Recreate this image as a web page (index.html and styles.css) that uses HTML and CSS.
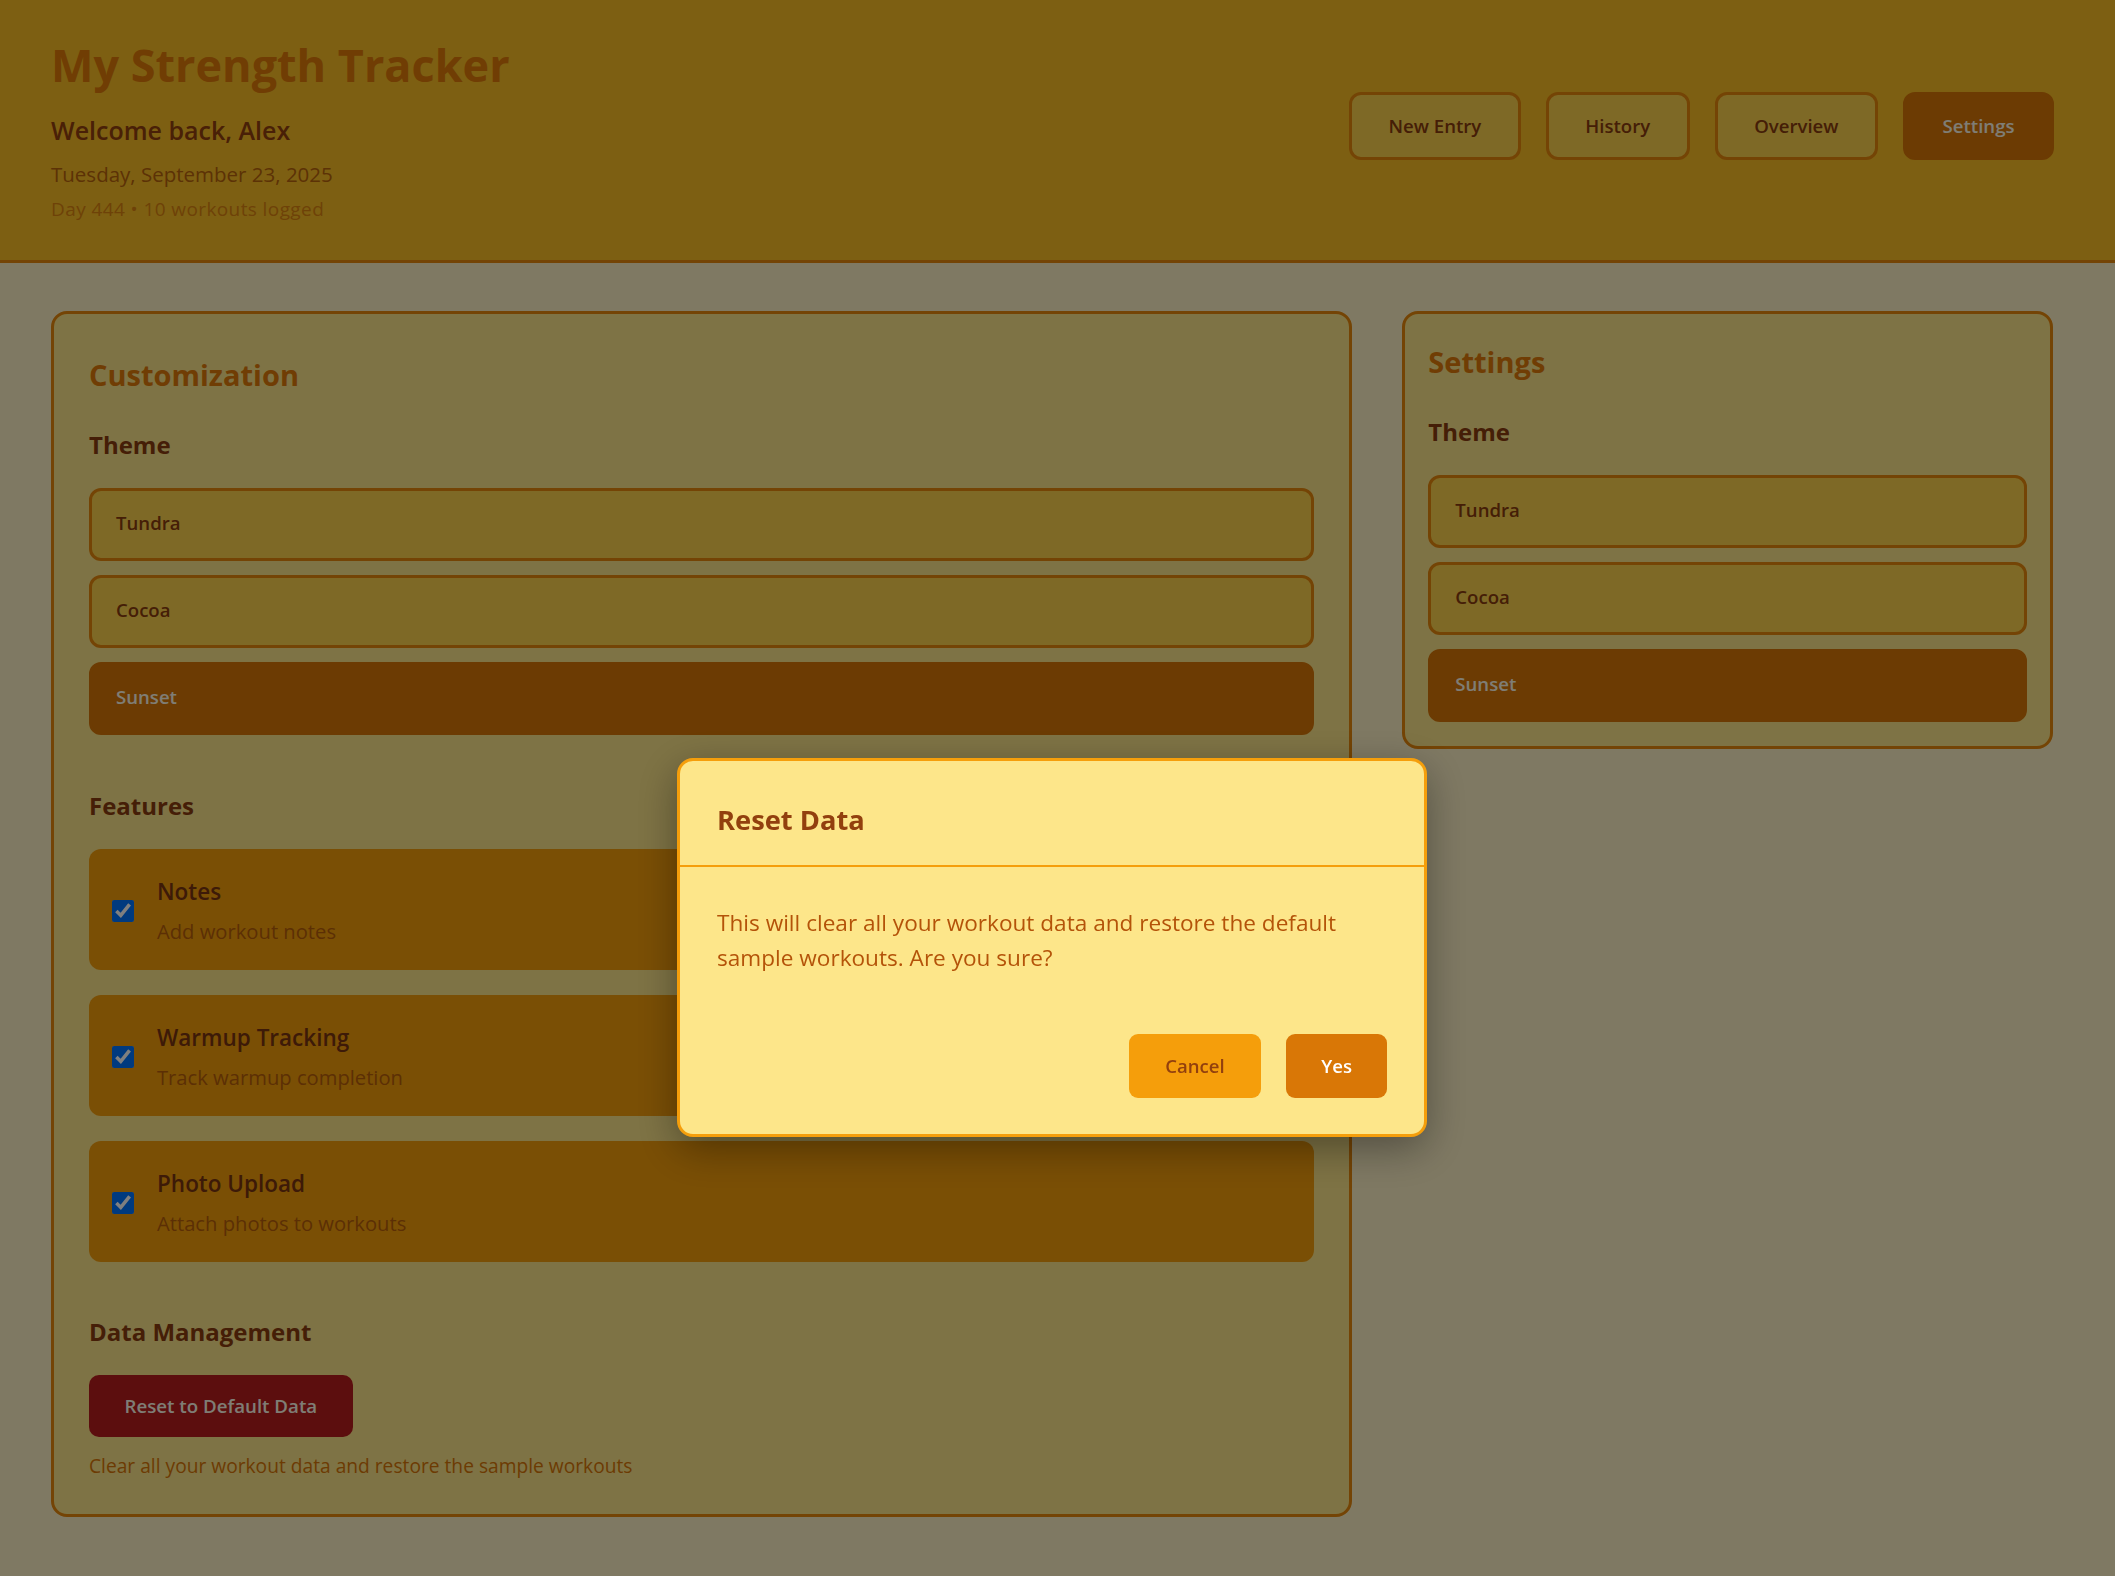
FILE: index.html
```html
<!DOCTYPE html>
<html lang="en">
<head>
<meta charset="utf-8">
<title>My Strength Tracker</title>
<link rel="stylesheet" href="styles.css">
</head>
<body>
<header class="app-header">
  <div class="brand">
    <h1 class="brand-title">My Strength Tracker</h1>
    <p class="brand-welcome">Welcome back, Alex</p>
    <p class="brand-date">Tuesday, September 23, 2025</p>
    <p class="brand-stats">Day 444 • 10 workouts logged</p>
  </div>
  <nav class="nav">
    <button class="nav-btn">New Entry</button>
    <button class="nav-btn">History</button>
    <button class="nav-btn">Overview</button>
    <button class="nav-btn is-active">Settings</button>
  </nav>
</header>

<main class="layout">
  <section class="panel panel-main">
    <h2 class="panel-title">Customization</h2>

    <div class="section">
      <h3 class="section-title">Theme</h3>
      <div class="theme-list">
        <button class="theme-option">Tundra</button>
        <button class="theme-option">Cocoa</button>
        <button class="theme-option is-selected">Sunset</button>
      </div>
    </div>

    <div class="section">
      <h3 class="section-title">Features</h3>
      <div class="feature-list">
        <label class="feature-card">
          <input class="feature-check" type="checkbox" checked>
          <span class="feature-text">
            <span class="feature-name">Notes</span>
            <span class="feature-desc">Add workout notes</span>
          </span>
        </label>
        <label class="feature-card">
          <input class="feature-check" type="checkbox" checked>
          <span class="feature-text">
            <span class="feature-name">Warmup Tracking</span>
            <span class="feature-desc">Track warmup completion</span>
          </span>
        </label>
        <label class="feature-card">
          <input class="feature-check" type="checkbox" checked>
          <span class="feature-text">
            <span class="feature-name">Photo Upload</span>
            <span class="feature-desc">Attach photos to workouts</span>
          </span>
        </label>
      </div>
    </div>

    <div class="section">
      <h3 class="section-title">Data Management</h3>
      <button class="danger-btn">Reset to Default Data</button>
      <p class="hint">Clear all your workout data and restore the sample workouts</p>
    </div>
  </section>

  <aside class="panel panel-side">
    <h2 class="panel-title">Settings</h2>
    <div class="section">
      <h3 class="section-title">Theme</h3>
      <div class="theme-list">
        <button class="theme-option">Tundra</button>
        <button class="theme-option">Cocoa</button>
        <button class="theme-option is-selected">Sunset</button>
      </div>
    </div>
  </aside>
</main>

<div class="overlay">
  <div class="modal" role="dialog" aria-labelledby="modal-title">
    <div class="modal-header">
      <h2 class="modal-title" id="modal-title">Reset Data</h2>
    </div>
    <div class="modal-body">
      <p class="modal-text">This will clear all your workout data and restore the default sample workouts. Are you sure?</p>
    </div>
    <div class="modal-footer">
      <button class="modal-btn modal-btn-cancel">Cancel</button>
      <button class="modal-btn modal-btn-confirm">Yes</button>
    </div>
  </div>
</div>
</body>
</html>
```
FILE: styles.css
```css
* { box-sizing: border-box; }

html, body {
  margin: 0;
  padding: 0;
}

body {
  font-family: "Open Sans", "Noto Sans", sans-serif;
  background: #fef3c7;
  color: #92400e;
  min-height: 100vh;
}

button {
  font-family: inherit;
  cursor: pointer;
}

/* ---------- Header ---------- */
.app-header {
  display: flex;
  justify-content: space-between;
  align-items: flex-start;
  background: #fbbf24;
  border-bottom: 3px solid #e8880a;
  padding: 38px 61px 38px 51px;
}

.brand-title {
  margin: 0;
  font-size: 45px;
  line-height: 53px;
  font-weight: 700;
  color: #e07a08;
}

.brand-welcome {
  margin: 22px 0 0;
  font-size: 25px;
  line-height: 34px;
  font-weight: 600;
  color: #92400e;
}

.brand-date {
  margin: 12.7px 0 0;
  font-size: 20.5px;
  line-height: 28px;
  color: #b8640c;
}

.brand-stats {
  margin: 8.6px 0 0;
  font-size: 19px;
  line-height: 26px;
  letter-spacing: 0.4px;
  color: #dc8410;
}

.nav {
  display: flex;
  gap: 25px;
  margin-top: 53.5px;
}

.nav-btn {
  font-size: 18.6px;
  line-height: 26px;
  font-weight: 600;
  padding: 18px 36.5px;
  border: 3px solid #e8880a;
  border-radius: 12px;
  background: #fcd34d;
  color: #8a3c0e;
}

.nav-btn.is-active {
  background: #d97706;
  border-color: #d97706;
  color: #fffbeb;
}

/* ---------- Layout ---------- */
.layout {
  display: grid;
  grid-template-columns: 2fr 1fr;
  gap: 50px;
  align-items: start;
  padding: 48px 62px 48px 51px;
}

.panel {
  background: #fde68a;
  border: 3px solid #e8880a;
  border-radius: 16px;
}

.panel-main {
  padding: 42px 35px 35px;
}

.panel-side {
  padding: 29px 23px 24px;
}

.panel-title {
  margin: 0 0 34.5px;
  font-size: 29px;
  line-height: 38px;
  font-weight: 700;
  color: #e07a08;
}

.section + .section {
  margin-top: 54.5px;
}

.section-title {
  margin: 0 0 27px;
  font-size: 24px;
  line-height: 32px;
  font-weight: 700;
  color: #8a3c0e;
}

/* ---------- Theme options ---------- */
.theme-list {
  display: flex;
  flex-direction: column;
  gap: 13.5px;
}

.theme-option {
  display: flex;
  align-items: center;
  width: 100%;
  height: 73.5px;
  padding: 0 24px 3px;
  border: 3px solid #e8880a;
  border-radius: 12px;
  background: #fcd34d;
  color: #8a3c0e;
  font-size: 18.6px;
  line-height: 26px;
  font-weight: 600;
  text-align: left;
}

.theme-option.is-selected {
  background: #d97706;
  border-color: #d97706;
  color: #fffbeb;
}

/* ---------- Features ---------- */
.feature-list {
  display: flex;
  flex-direction: column;
  gap: 25px;
}

.feature-card {
  display: flex;
  align-items: center;
  gap: 23px;
  padding: 27px 23px 24px;
  background: #f59e0b;
  border-radius: 12px;
}

.feature-check {
  width: 22px;
  height: 22px;
  margin: 0;
  flex: none;
}

.feature-text {
  display: flex;
  flex-direction: column;
}

.feature-name {
  font-size: 22.5px;
  line-height: 32px;
  font-weight: 600;
  color: #7a3510;
}

.feature-desc {
  margin-top: 8px;
  font-size: 20.2px;
  line-height: 30px;
  color: #b85e0a;
}

/* ---------- Data management ---------- */
.danger-btn {
  font-size: 18.7px;
  line-height: 26px;
  font-weight: 600;
  padding: 18px 35.5px;
  border: none;
  border-radius: 10px;
  background: #b91c1c;
  color: #fffbeb;
}

.hint {
  margin: 15px 0 0;
  font-size: 19.2px;
  line-height: 27px;
  color: #d97706;
}

/* ---------- Modal ---------- */
.overlay {
  position: fixed;
  inset: 0;
  background: rgba(0, 0, 0, 0.5);
  display: flex;
  justify-content: center;
  align-items: flex-start;
  padding: 758px 62px 0 51px;
}

.modal {
  width: 750px;
  background: #fde68a;
  border: 3px solid #f59e0b;
  border-radius: 16px;
  box-shadow: 0 12px 40px rgba(0, 0, 0, 0.35);
}

.modal-header {
  padding: 41px 37px 27px;
  border-bottom: 2px solid #f59e0b;
}

.modal-title {
  margin: 0;
  font-size: 27.3px;
  line-height: 36px;
  font-weight: 700;
  color: #92400e;
}

.modal-body {
  padding: 38px 37px 0;
}

.modal-text {
  margin: 0;
  font-size: 22.6px;
  line-height: 35px;
  color: #b45309;
}

.modal-footer {
  display: flex;
  justify-content: flex-end;
  gap: 25px;
  padding: 59px 37px 36px;
}

.modal-btn {
  font-size: 18.6px;
  line-height: 26px;
  font-weight: 600;
  padding: 19px 36.5px;
  border: none;
  border-radius: 9px;
}

.modal-btn-cancel {
  background: #f59e0b;
  color: #92400e;
}

.modal-btn-confirm {
  padding: 19px 35px;
  background: #d97706;
  color: #ffffff;
}
```
